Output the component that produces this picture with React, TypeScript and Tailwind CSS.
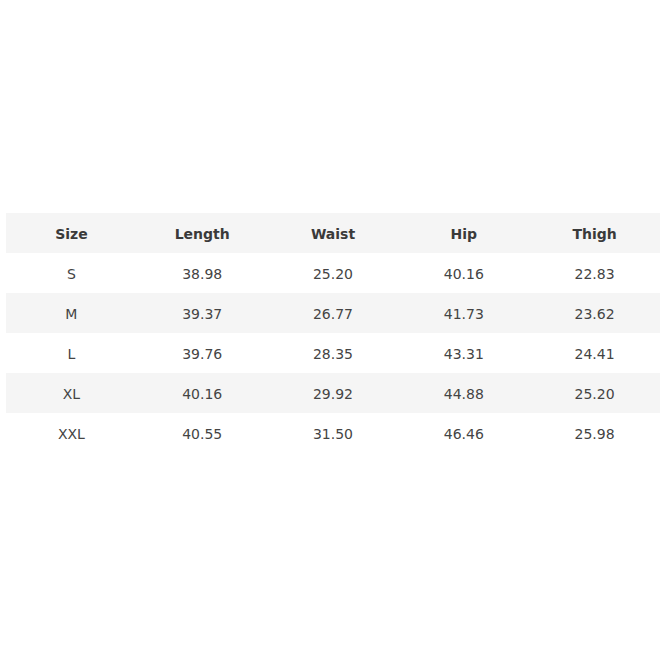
import React from 'react';

const rows = [
  ['S', '38.98', '25.20', '40.16', '22.83'],
  ['M', '39.37', '26.77', '41.73', '23.62'],
  ['L', '39.76', '28.35', '43.31', '24.41'],
  ['XL', '40.16', '29.92', '44.88', '25.20'],
  ['XXL', '40.55', '31.50', '46.46', '25.98'],
];

const headers = ['Size', 'Length', 'Waist', 'Hip', 'Thigh'];

function App(): JSX.Element {
  return (
    <div className="w-[667px] h-[667px] bg-white pt-[213px] pl-[6px]" style={{ fontFamily: '"DejaVu Sans", Verdana, sans-serif' }}>
      <table className="w-[654px] table-fixed border-collapse text-[14px]">
        <thead>
          <tr className="h-[40px] bg-[#f5f5f5]">
            {headers.map((h) => (
              <th key={h} className="pt-[2px] text-center font-bold text-[#3a3a3a]">
                {h}
              </th>
            ))}
          </tr>
        </thead>
        <tbody>
          {rows.map((row, i) => (
            <tr key={row[0]} className={i % 2 === 1 ? 'h-[40px] bg-[#f5f5f5]' : 'h-[40px] bg-white'}>
              {row.map((cell, j) => (
                <td key={j} className="pt-[2px] text-center text-[#444]">
                  {cell}
                </td>
              ))}
            </tr>
          ))}
        </tbody>
      </table>
    </div>
  );
}

export default App;
